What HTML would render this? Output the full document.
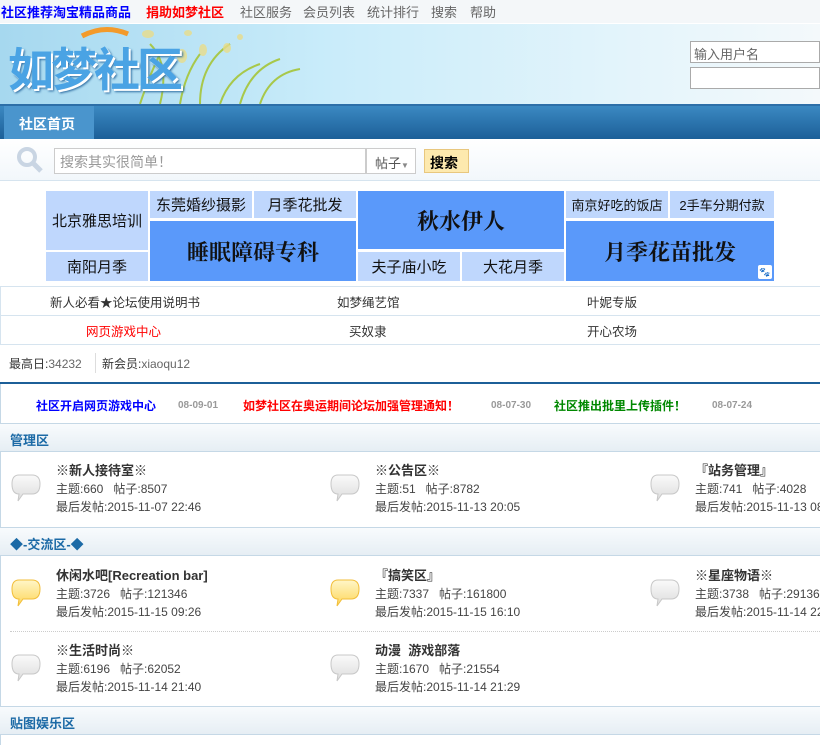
<!DOCTYPE html><html><head><meta charset="utf-8"><style>
*{margin:0;padding:0;box-sizing:border-box}
body{width:820px;height:745px;overflow:hidden;position:relative;font-family:"Liberation Sans","Noto Sans CJK SC",sans-serif;font-size:12px;color:#333;background:#fff}
.a{position:absolute;white-space:nowrap}
.top{top:0;left:0;width:820px;height:24px;background:#f4f7f9;border-bottom:1px solid #fff}
.top span{position:absolute;top:2px;font-size:13px;color:#666}
.hdr{top:24px;left:0;width:820px;height:80px;background:linear-gradient(90deg,#a6d8ef 0%,#c9ecfa 40%,#e6f5fb 80%,#f4f9fb 100%)}
.nav{top:104px;left:0;width:820px;height:35px;background:linear-gradient(#3b89c2,#1c5f98);border-top:2px solid #2d6fa8}
.box{position:absolute;display:flex;align-items:center;justify-content:center;color:#111;font-size:15px}
.lt{background:#bfd7fd}.dk{background:#5a99fa;font-size:22px;font-family:"Liberation Serif","Noto Serif CJK SC",serif;font-weight:bold;color:#111}
.hd{position:absolute;left:0;width:820px;height:29px;background:linear-gradient(#f8fbfd,#e6eef4);border-top:1px solid #c5d8e6;border-bottom:1px solid #c5d8e6;font-weight:bold;color:#1c6aa6;font-size:13px;padding:6px 10px}
.f{position:absolute;line-height:18px;font-size:12px;color:#444}
.f b{font-size:13px;color:#333}
.bub{position:absolute;width:30px;height:30px}
</style></head><body>
<div class="a top">
<span style="left:1px;color:#00f;font-weight:bold">社区推荐淘宝精品商品</span>
<span style="left:146px;color:#f00;font-weight:bold">捐助如梦社区</span>
<span style="left:240px">社区服务</span><span style="left:303px">会员列表</span><span style="left:367px">统计排行</span><span style="left:431px">搜索</span><span style="left:470px">帮助</span>
</div>
<div class="a hdr">
<svg width="420" height="80" style="position:absolute;left:0;top:0">
<g stroke="#a8c84a" stroke-width="2" fill="none"><path d="M160 80 Q170 40 150 20"/><path d="M180 80 Q185 50 200 30"/><path d="M200 80 Q200 40 230 20"/><path d="M220 80 Q230 50 260 40"/><path d="M260 80 Q270 50 300 45"/><path d="M140 80 Q150 50 160 30"/><path d="M240 80 Q250 45 280 35"/></g>
<g fill="#e9dd8a" opacity=".8"><ellipse cx="148" cy="10" rx="6" ry="4"/><ellipse cx="188" cy="9" rx="4" ry="3"/><ellipse cx="182" cy="32" rx="5" ry="7"/><ellipse cx="203" cy="26" rx="4" ry="6"/><ellipse cx="227" cy="24" rx="4" ry="5"/><ellipse cx="240" cy="13" rx="3" ry="3"/></g>
<path d="M82 12 Q105 0 128 10" stroke="#f39a2a" stroke-width="5" fill="none"/>
</svg>
<div class="a" style="left:8px;top:10px;font-size:46px;font-weight:bold;color:#4aa3e4;letter-spacing:-3px;text-shadow:2px 2px 0 #fff,3px 3px 2px #2a6aa0">如梦社区</div>
<div class="a" style="left:690px;top:17px;width:130px;height:22px;background:#fff;border:1px solid #aaa;color:#666;font-size:13px;padding:2px 3px">输入用户名</div>
<div class="a" style="left:690px;top:43px;width:130px;height:22px;background:#fff;border:1px solid #aaa"></div>
</div>
<div class="a nav"><div class="a" style="left:4px;top:0;width:90px;height:33px;background:#4a95cd;color:#fff;font-size:14px;font-weight:bold;padding:8px 0 0 15px">社区首页</div></div>
<div class="a" style="top:139px;left:0;width:820px;height:42px;background:linear-gradient(#fff,#f2f7fb);border-bottom:1px solid #d6e4ef">
<svg class="a" style="left:16px;top:8px" width="28" height="26"><circle cx="11" cy="10" r="8" fill="none" stroke="#c9d5e3" stroke-width="4"/><path d="M17 16 L25 24" stroke="#c9d5e3" stroke-width="5"/></svg>
<div class="a" style="left:54px;top:9px;width:312px;height:26px;border:1px solid #ccc;background:#fff;color:#999;font-size:14px;padding:3px 5px">搜索其实很简单！</div>
<div class="a" style="left:366px;top:9px;width:50px;height:26px;border:1px solid #ccc;background:#fff;color:#555;font-size:13px;padding:4px 8px">帖子<span style="font-size:8px;color:#888">▼</span></div>
<div class="a" style="left:424px;top:10px;width:45px;height:24px;border:1px solid #e8c77e;background:#fde9ae;font-weight:bold;font-size:14px;padding:3px 5px;color:#000">搜索</div>
</div>
<div class="box lt" style="left:46px;top:191px;width:102px;height:59px">北京雅思培训</div>
<div class="box lt" style="left:46px;top:252px;width:102px;height:29px">南阳月季</div>
<div class="box lt" style="left:150px;top:191px;width:102px;height:27px">东莞婚纱摄影</div>
<div class="box lt" style="left:254px;top:191px;width:102px;height:27px">月季花批发</div>
<div class="box dk" style="left:150px;top:221px;width:206px;height:60px">睡眠障碍专科</div>
<div class="box dk" style="left:358px;top:191px;width:206px;height:58px">秋水伊人</div>
<div class="box lt" style="left:358px;top:252px;width:102px;height:29px">夫子庙小吃</div>
<div class="box lt" style="left:462px;top:252px;width:102px;height:29px">大花月季</div>
<div class="box lt" style="left:566px;top:191px;width:102px;height:27px;font-size:13px">南京好吃的饭店</div>
<div class="box lt" style="left:670px;top:191px;width:104px;height:27px;font-size:13px">2手车分期付款</div>
<div class="box dk" style="left:566px;top:221px;width:208px;height:60px">月季花苗批发<span style="position:absolute;right:2px;bottom:2px;width:14px;height:14px;background:#fff;border-radius:2px;font-size:9px;color:#5a99fa;line-height:14px;text-align:center">🐾</span></div>
<div class="a" style="left:0;top:286px;width:820px;height:59px;border-top:1px solid #d6e4ef;border-bottom:1px solid #d6e4ef;border-left:1px solid #d6e4ef"></div>
<div class="a" style="left:0;top:315px;width:820px;height:1px;background:#d6e4ef"></div>
<div class="a" style="left:50px;top:292px;font-size:12.5px">新人必看★论坛使用说明书</div>
<div class="a" style="left:337px;top:292px;font-size:12.5px">如梦绳艺馆</div>
<div class="a" style="left:587px;top:292px;font-size:12.5px">叶妮专版</div>
<div class="a" style="left:86px;top:321px;font-size:12.5px;color:#f00">网页游戏中心</div>
<div class="a" style="left:349px;top:321px;font-size:12.5px">买奴隶</div>
<div class="a" style="left:587px;top:321px;font-size:12.5px">开心农场</div>
<div class="a" style="left:9px;top:355px;color:#333">最高日:<span style="color:#666">34232</span></div>
<div class="a" style="left:95px;top:353px;width:1px;height:20px;background:#ddd"></div>
<div class="a" style="left:102px;top:355px;color:#333">新会员:<span style="color:#666">xiaoqu12</span></div>
<div class="a" style="left:0;top:382px;width:820px;height:2px;background:#1c5f98"></div>
<div class="a" style="left:0;top:384px;width:1px;height:361px;background:#c5d8e6"></div>
<div class="a" style="left:36px;top:397px;font-weight:bold;color:#00f">社区开启网页游戏中心</div>
<div class="a" style="left:178px;top:399px;font-size:10px;color:#999;font-weight:bold;line-height:14px">08-09-01</div>
<div class="a" style="left:243px;top:397px;font-weight:bold;color:#f00">如梦社区在奥运期间论坛加强管理通知！</div>
<div class="a" style="left:491px;top:399px;font-size:10px;color:#999;font-weight:bold;line-height:14px">08-07-30</div>
<div class="a" style="left:554px;top:397px;font-weight:bold;color:#080">社区推出批里上传插件！</div>
<div class="a" style="left:712px;top:399px;font-size:10px;color:#999;font-weight:bold;line-height:14px">08-07-24</div>
<div class="hd" style="top:423px">管理区</div>
<div class="hd" style="top:527px">◆-交流区-◆</div>
<div class="hd" style="top:706px">贴图娱乐区</div>
<div class="a" style="left:10px;top:631px;width:810px;border-top:1px dotted #ccc"></div>
<svg width="0" height="0" style="position:absolute"><defs>
<linearGradient id="g" x1="0" y1="0" x2="0" y2="1"><stop offset="0" stop-color="#fafafa"/><stop offset="1" stop-color="#dcdcdc"/></linearGradient>
<linearGradient id="y" x1="0" y1="0" x2="0" y2="1"><stop offset="0" stop-color="#fff6c8"/><stop offset="1" stop-color="#fdd65a"/></linearGradient></defs></svg>
<svg class="bub" style="left:11px;top:474px"><path d="M8 1 H21 Q29 1 29 10 Q29 20 21 20 H12 L7 27 L8 20 Q1 20 1 10 Q1 1 8 1Z" fill="url(#g)" stroke="#c8c8c8"/></svg>
<svg class="bub" style="left:330px;top:474px"><path d="M8 1 H21 Q29 1 29 10 Q29 20 21 20 H12 L7 27 L8 20 Q1 20 1 10 Q1 1 8 1Z" fill="url(#g)" stroke="#c8c8c8"/></svg>
<svg class="bub" style="left:650px;top:474px"><path d="M8 1 H21 Q29 1 29 10 Q29 20 21 20 H12 L7 27 L8 20 Q1 20 1 10 Q1 1 8 1Z" fill="url(#g)" stroke="#c8c8c8"/></svg>
<svg class="bub" style="left:11px;top:579px"><path d="M8 1 H21 Q29 1 29 10 Q29 20 21 20 H12 L7 27 L8 20 Q1 20 1 10 Q1 1 8 1Z" fill="url(#y)" stroke="#f2be3a"/></svg>
<svg class="bub" style="left:330px;top:579px"><path d="M8 1 H21 Q29 1 29 10 Q29 20 21 20 H12 L7 27 L8 20 Q1 20 1 10 Q1 1 8 1Z" fill="url(#y)" stroke="#f2be3a"/></svg>
<svg class="bub" style="left:650px;top:579px"><path d="M8 1 H21 Q29 1 29 10 Q29 20 21 20 H12 L7 27 L8 20 Q1 20 1 10 Q1 1 8 1Z" fill="url(#g)" stroke="#c8c8c8"/></svg>
<svg class="bub" style="left:11px;top:654px"><path d="M8 1 H21 Q29 1 29 10 Q29 20 21 20 H12 L7 27 L8 20 Q1 20 1 10 Q1 1 8 1Z" fill="url(#g)" stroke="#c8c8c8"/></svg>
<svg class="bub" style="left:330px;top:654px"><path d="M8 1 H21 Q29 1 29 10 Q29 20 21 20 H12 L7 27 L8 20 Q1 20 1 10 Q1 1 8 1Z" fill="url(#g)" stroke="#c8c8c8"/></svg>
<div class="f" style="left:56px;top:462px"><b>※新人接待室※</b><br>主题:660&nbsp;&nbsp;&nbsp;帖子:8507<br>最后发帖:2015-11-07 22:46</div>
<div class="f" style="left:375px;top:462px"><b>※公告区※</b><br>主题:51&nbsp;&nbsp;&nbsp;帖子:8782<br>最后发帖:2015-11-13 20:05</div>
<div class="f" style="left:695px;top:462px;white-space:nowrap"><b>『站务管理』</b><br>主题:741&nbsp;&nbsp;&nbsp;帖子:4028<br>最后发帖:2015-11-13 08:00</div>
<div class="f" style="left:56px;top:567px"><b>休闲水吧[Recreation bar]</b><br>主题:3726&nbsp;&nbsp;&nbsp;帖子:121346<br>最后发帖:2015-11-15 09:26</div>
<div class="f" style="left:375px;top:567px"><b>『搞笑区』</b><br>主题:7337&nbsp;&nbsp;&nbsp;帖子:161800<br>最后发帖:2015-11-15 16:10</div>
<div class="f" style="left:695px;top:567px;white-space:nowrap"><b>※星座物语※</b><br>主题:3738&nbsp;&nbsp;&nbsp;帖子:29136<br>最后发帖:2015-11-14 22:00</div>
<div class="f" style="left:56px;top:642px"><b>※生活时尚※</b><br>主题:6196&nbsp;&nbsp;&nbsp;帖子:62052<br>最后发帖:2015-11-14 21:40</div>
<div class="f" style="left:375px;top:642px"><b>动漫&nbsp;&nbsp;游戏部落</b><br>主题:1670&nbsp;&nbsp;&nbsp;帖子:21554<br>最后发帖:2015-11-14 21:29</div>
</body></html>
